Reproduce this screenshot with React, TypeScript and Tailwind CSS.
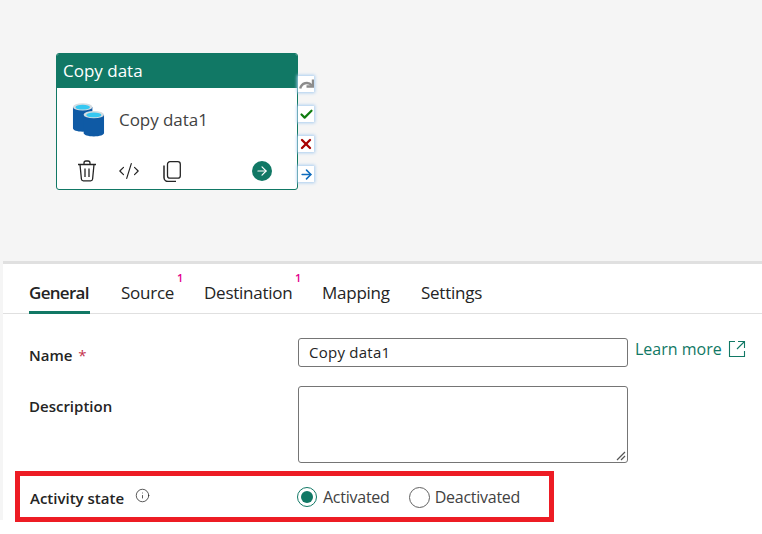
import React from 'react';
import { CodeXml, ArrowRight, Check, X, Info } from 'lucide-react';

const tabs = [
  { label: 'General', active: true, badge: false, className: 'ml-[25px] w-[61px]' },
  { label: 'Source', active: false, badge: true, className: 'ml-[31px] w-[53px]' },
  { label: 'Destination', active: false, badge: true, className: 'ml-[30px] w-[88px]' },
  { label: 'Mapping', active: false, badge: false, className: 'ml-[30px] w-[69px]' },
  { label: 'Settings', active: false, badge: false, className: 'ml-[30px] w-[63px]' },
];

function DbIcon() {
  return (
    <svg width="33" height="35" viewBox="0 0 34 36">
      <path d="M1 5v22c0 2 4 3.500 10 3.500s10-1.500 10-3.500V5z" fill="#0f5aa5" />
      <ellipse cx="11" cy="5" rx="10" ry="3.800" fill="#d5dde2" />
      <ellipse cx="11" cy="5.300" rx="7.500" ry="2.500" fill="#35c8f2" />
      <path d="M12 13v19c0 2 4.500 3.500 10.500 3.500S33 34 33 32V13z" fill="#0f5aa5" />
      <ellipse cx="22.500" cy="13" rx="10.500" ry="3.800" fill="#d5dde2" />
      <ellipse cx="22.500" cy="13.300" rx="7.800" ry="2.500" fill="#35c8f2" />
    </svg>
  );
}

function TrashIcon() {
  return (
    <svg width="20" height="22" viewBox="0 0 20 22" fill="none" stroke="#242424" strokeWidth="1.300">
      <path d="M1 4.500h18M7 4.500V3a2 2 0 0 1 2-2h2a2 2 0 0 1 2 2v1.500" />
      <path d="M3 4.500l1.400 14.500a2 2 0 0 0 2 1.800h7.200a2 2 0 0 0 2-1.800L17 4.500" />
      <path d="M8 8.500v8.500M12 8.500v8.500" />
    </svg>
  );
}

function CopyIcon() {
  return (
    <svg width="18" height="21" viewBox="0 0 18 21" fill="none" stroke="#242424" strokeWidth="1.300">
      <rect x="4.500" y="0.700" width="12.800" height="16.500" rx="2.500" />
      <path d="M1 4.500v12a4 4 0 0 0 4 4h8" strokeWidth="1.500" />
    </svg>
  );
}

function RedoIcon() {
  return (
    <svg width="15" height="12" viewBox="0 0 15 12" fill="none" stroke="#8c8c8c" strokeWidth="2.400">
      <path d="M1.200 10.500C2.500 5 9 3 13 7.500" />
      <path d="M14 1.500v7H7.500" />
    </svg>
  );
}

function Port({ children }: { children: React.ReactNode }) {
  return (
    <div className="flex h-[16px] w-[16px] items-center justify-center bg-white shadow-[0_0_3px_1px_#a9cdf0]">
      {children}
    </div>
  );
}

function CopyNode() {
  return (
    <div className="absolute left-[56px] top-[53px] flex">
      <div className="h-[137px] w-[242px] overflow-hidden rounded-[3px] border border-[#117865] bg-white">
        <div className="flex h-[34px] items-center bg-[#117865] pl-[6px] text-[17px] text-white">Copy data</div>
        <div className="ml-[15px] mt-[14px] flex items-center gap-[14px] text-[17px] tracking-[-0.05px] text-[#424242]">
          <DbIcon />
          <span>Copy data1</span>
        </div>
        <div className="ml-[20px] mt-[23px] flex h-[22px] items-center text-[#242424]">
          <TrashIcon />
          <CodeXml size={22} strokeWidth={1.300} className="ml-[21px]" />
          <div className="ml-[23px] flex"><CopyIcon /></div>
          <div className="ml-[71px] flex h-[20px] w-[20px] items-center justify-center rounded-full bg-[#117865]">
            <ArrowRight size={14} color="white" strokeWidth={2} />
          </div>
        </div>
      </div>
      <div className="mt-[23px] flex flex-col gap-[14px]">
        <Port><RedoIcon /></Port>
        <Port><Check size={15} color="#107c10" strokeWidth={3.500} /></Port>
        <Port><X size={16} color="#a80000" strokeWidth={3.500} /></Port>
        <Port><ArrowRight size={15} color="#0f6cbd" strokeWidth={2.500} /></Port>
      </div>
    </div>
  );
}

export default function App() {
  return (
    <div className="relative h-[534px] w-[762px] overflow-hidden bg-white font-['Open_Sans',sans-serif] text-[#242424]">
      <div className="h-[261px] bg-[#f5f5f5]">
        <CopyNode />
      </div>
      <div className="flex h-[259px] bg-[#f5f5f5]">
        <div className="w-[3px]" />
        <div className="flex-1 border-t-[3px] border-[#e0e0e0] bg-white">
          <div className="flex h-[50px] border-b border-[#e0e0e0] pl-px">
            {tabs.map((t) => (
              <div
                key={t.label}
                className={`relative flex h-[50px] items-center whitespace-nowrap text-[17px] ${t.className} ${t.active ? 'border-b-[3px] border-[#117865] pt-[11px] font-semibold tracking-[-0.7px]' : 'pt-[8px] tracking-[-0.25px]'}`}
              >
                {t.label}
                {t.badge && <span className="absolute -right-[9px] top-[6px] text-[11px] font-semibold text-[#e3008c]">1</span>}
              </div>
            ))}
          </div>
          <div className="flex pl-[26px] pt-[24px]">
            <div className="w-[269px] text-[15px] font-semibold">
              <div className="h-[48px] pt-[6px]">
                Name <span className="ml-[2px] font-normal text-[#c4314b]">*</span>
              </div>
              <div className="pt-[9px]">Description</div>
            </div>
            <div className="w-[330px]">
              <div className="flex h-[29px] items-center rounded-[3px] border border-[#757575] pl-[10px] text-[15px] tracking-[0.25px]">
                Copy data1
              </div>
              <div className="relative mt-[19px] h-[77px] rounded-[3px] border border-[#757575]">
                <svg className="absolute bottom-[1px] right-[1px]" width="10" height="10" viewBox="0 0 10 10" stroke="#555" strokeWidth="1.200">
                  <path d="M1 9l8-8M5 9l4-4" />
                </svg>
              </div>
            </div>
            <div className="ml-[7px] flex h-[22px] items-center text-[16px] text-[#117865]">
              Learn more
              <svg className="ml-[6px]" width="18" height="18" viewBox="0 0 18 18" fill="none" stroke="#117865" strokeWidth="1.100">
                <path d="M7 1.500H1.500v15h15V11M10 1.500h6.500V8M16.500 1.500L9 9" />
              </svg>
            </div>
          </div>
        </div>
      </div>
      <div className="absolute left-[15px] top-[471px] flex h-[51px] w-[539px] items-center border-[5px] border-[#ed1c24] bg-white pl-[10px]">
        <div className="flex w-[267px] items-center pt-[4px] text-[15px] font-semibold">
          Activity state
          <Info size={15} strokeWidth={1.200} className="ml-[11px] mb-[6px]" />
        </div>
        <div className="flex items-center pt-[1px] text-[16px] tracking-[-0.25px] text-[#424242]">
          <div className="flex h-[20px] w-[20px] items-center justify-center rounded-full border border-[#117865]">
            <div className="h-[12px] w-[12px] rounded-full bg-[#117865]" />
          </div>
          <span className="ml-[6px]">Activated</span>
          <div className="ml-[19px] h-[21px] w-[21px] rounded-full border border-[#616161]" />
          <span className="ml-[5px]">Deactivated</span>
        </div>
      </div>
    </div>
  );
}
